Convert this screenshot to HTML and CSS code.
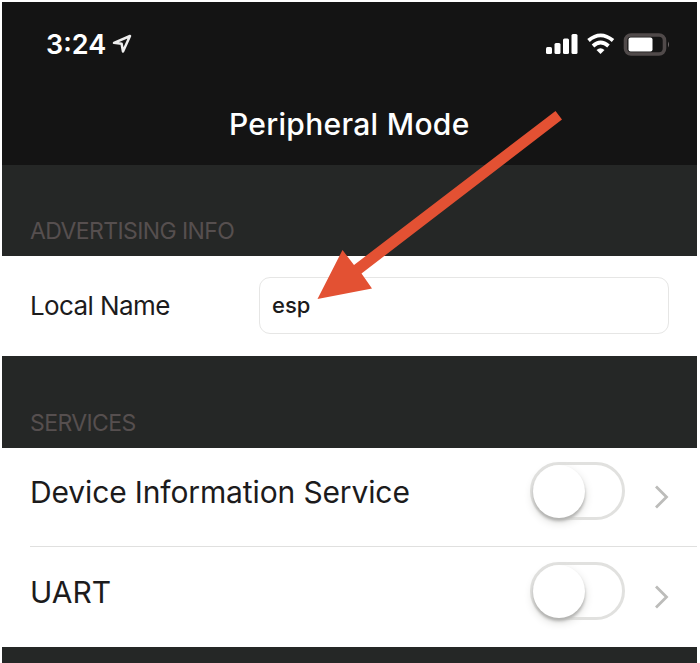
FILE: index.html
```html
<!DOCTYPE html>
<html lang="en">
<head>
<meta charset="utf-8">
<title>Peripheral Mode</title>
<link rel="stylesheet" href="styles.css">
</head>
<body>
<main class="screen">
  <header class="header">
    <div class="status">
      <span class="time">3:24</span>
      <svg class="location" width="20" height="20" viewBox="0 0 20 20"><path d="M2 8.800 18 2 11 17.500 9.600 9.800Z" fill="none" stroke="#eee" stroke-width="2.500" stroke-linejoin="round"/></svg>
      <svg class="indicators" width="126" height="26" viewBox="0 0 126 26">
        <g fill="#fff">
          <rect x="1" y="15" width="6" height="7" rx="1.500"/>
          <rect x="9.500" y="11" width="6" height="11" rx="1.500"/>
          <rect x="18" y="6.500" width="6" height="15.500" rx="1.500"/>
          <rect x="26.500" y="2" width="6" height="20" rx="1.500"/>
          <path d="M55.500 22 51.500 18Q55.500 14.500 59.500 18Z"/>
        </g>
        <g fill="none" stroke="#fff" stroke-width="3.800">
          <path d="M43.500 8.500Q55.500-1.800 68 8.500"/>
          <path d="M48 14Q55.500 7 63.500 14"/>
        </g>
        <rect x="80.500" y="3" width="39" height="19" rx="5.500" fill="none" stroke="#504a4a" stroke-width="3.600"/>
        <rect x="83.500" y="5.500" width="24" height="14" rx="2" fill="#fff"/>
        <path d="M123 9.500Q125 12.500 123 15.500Z" fill="#706a6a"/>
      </svg>
    </div>
    <h1 class="title">Peripheral Mode</h1>
  </header>
  <h2 class="section advertising"><span>ADVERTISING INFO</span></h2>
  <div class="name-row">
    <label class="name-label" for="name">Local Name</label>
    <div class="field" id="name"><span>esp</span></div>
  </div>
  <h2 class="section services"><span>SERVICES</span></h2>
  <div class="row">
    <span class="label device">Device Information Service</span>
    <span class="toggle"><i class="knob"></i></span>
    <svg class="chevron" width="16" height="26" viewBox="0 0 16 26"><path d="M2 2.500 12.500 13 2 23.500" fill="none" stroke="#bcbcba" stroke-width="2.800"/></svg>
  </div>
  <div class="row last">
    <span class="label uart">UART</span>
    <span class="toggle"><i class="knob"></i></span>
    <svg class="chevron" width="16" height="26" viewBox="0 0 16 26"><path d="M2 2.500 12.500 13 2 23.500" fill="none" stroke="#bcbcba" stroke-width="2.800"/></svg>
  </div>
  <div class="footer"></div>
</main>
<svg class="arrow" width="700" height="663" viewBox="0 0 700 663"><path d="M317.500 299 342.500 250 354 265 555.500 111 562 119.500 361.500 273.500 372 288.500Z" fill="#e35133"/></svg>
</body>
</html>
```
FILE: styles.css
```css
* { box-sizing: border-box; }
body {
  margin: 0;
  position: relative;
  height: 663px;
  overflow: hidden;
  background: #fff;
  color: #1c1b1c;
  font-family: Inter, "Liberation Sans", sans-serif;
}
.screen {
  width: 694.500px;
  margin: 0 0 0 2px;
  padding-top: 2px;
}
.header {
  height: 163px;
  background: #141414;
  color: #fff;
}
.status {
  display: flex;
  height: 86px;
  padding: 0 26px 0 44px;
  align-items: center;
}
.time {
  font-size: 27px;
  font-weight: 600;
  line-height: 34px;
  width: 66px;
}
.indicators { margin-left: auto; }
.location { margin-top: -2px; }
.title {
  margin: 16px 0 0;
  padding-right: 0;
  text-align: center;
  font-size: 30px;
  font-weight: 500;
  line-height: 40px;
  letter-spacing: 0.300px;
}
.section {
  display: flex;
  align-items: flex-end;
  margin: 0;
  padding: 0 28px 11px;
  background: #252726;
  color: #564f4f;
  font-size: 23px;
  font-weight: 400;
  line-height: 28px;
  letter-spacing: -0.600px;
}
.advertising { height: 90.500px; }
.services { height: 92px; }
.name-row {
  display: flex;
  align-items: center;
  height: 100px;
  padding: 0 28px;
}
.name-label {
  width: 229px;
  font-size: 26px;
  letter-spacing: -0.600px;
}
.field {
  display: flex;
  align-items: center;
  width: 409.500px;
  height: 57px;
  border: 1.500px solid #e6e6e5;
  border-radius: 11px;
  padding: 0 0 2px 12px;
  font-size: 22px;
  font-weight: 500;
}
.row {
  display: flex;
  align-items: center;
  height: 99.500px;
  margin-left: 28px;
  padding-right: 27px;
  border-bottom: 1px solid #e0e0df;
}
.row.last { height: 100px; border-bottom: 0; }
.label {
  flex: 1;
  font-size: 30px;
  letter-spacing: -0.130px;
  padding-bottom: 9px;
}
.label.uart {
  padding-bottom: 11px;
  letter-spacing: 0;
}
.toggle {
  width: 95px;
  height: 58px;
  margin-top: -12px;
  border: 3px solid #e1e1df;
  border-radius: 29px;
}
.knob {
  display: block;
  width: 52px;
  height: 53px;
  border-radius: 50%;
  background: #fff;
  box-shadow: 0 3px 3px #b3b3b1, 0 4px 10px #d8d8d6;
}
.chevron { margin-left: 29px; }
.footer { height: 17px; background: #252726; }
.arrow {
  position: absolute;
  left: 0;
  top: 0;
}
```
